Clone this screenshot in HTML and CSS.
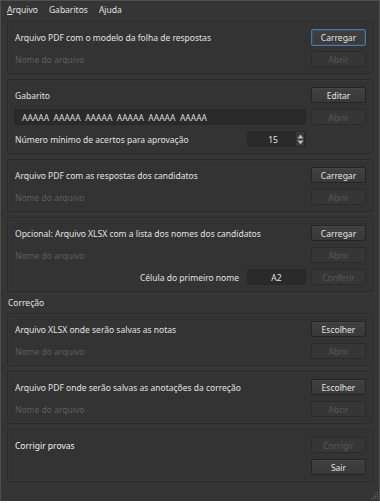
FILE: index.html
```html
<!DOCTYPE html>
<html lang="pt-BR">
<head>
    <meta charset="UTF-8">
    <meta name="viewport" content="width=device-width, initial-scale=1.0">
    <title>Correção de provas</title>
    <link rel="stylesheet" href="styles.css">
</head>
<body>
    <div class="window">

        <!-- Menu bar -->
        <nav class="menubar">
            <span class="menu"><u>A</u>rquivo</span>
            <span class="menu">Gabaritos</span>
            <span class="menu">A<u>j</u>uda</span>
        </nav>

        <main class="content">

            <!-- Modelo da folha -->
            <section class="group">
                <span class="label wide">Arquivo PDF com o modelo da folha de respostas</span>
                <button class="btn focused">Carregar</button>
                <span class="placeholder wide">Nome do arquivo</span>
                <button class="btn" disabled>Abrir</button>
            </section>

            <!-- Gabarito -->
            <section class="group">
                <span class="label wide">Gabarito</span>
                <button class="btn">Editar</button>
                <div class="field wide answers">AAAAA&nbsp;&nbsp;AAAAA&nbsp;&nbsp;AAAAA&nbsp;&nbsp;AAAAA&nbsp;&nbsp;AAAAA&nbsp;&nbsp;AAAAA</div>
                <button class="btn" disabled>Abrir</button>
                <span class="label">Número mínimo de acertos para aprovação</span>
                <div class="field spinbox">
                    <span class="spin-value">15</span>
                    <span class="spin-arrows">
                        <svg width="7" height="5" viewBox="0 0 7 5"><path d="M3.5 0.5 L6.5 4.5 L0.5 4.5 Z" fill="#b9b9b9"/></svg>
                        <svg width="7" height="5" viewBox="0 0 7 5"><path d="M0.5 0.5 L6.5 0.5 L3.5 4.5 Z" fill="#b9b9b9"/></svg>
                    </span>
                </div>
            </section>

            <!-- Respostas dos candidatos -->
            <section class="group">
                <span class="label wide">Arquivo PDF com as respostas dos candidatos</span>
                <button class="btn">Carregar</button>
                <span class="placeholder wide">Nome do arquivo</span>
                <button class="btn" disabled>Abrir</button>
            </section>

            <!-- Lista de nomes -->
            <section class="group">
                <span class="label wide">Opcional: Arquivo XLSX com a lista dos nomes dos candidatos</span>
                <button class="btn">Carregar</button>
                <span class="placeholder wide">Nome do arquivo</span>
                <button class="btn" disabled>Abrir</button>
                <span class="label right">Célula do primeiro nome</span>
                <div class="field cell">A2</div>
                <button class="btn" disabled>Conferir</button>
            </section>

            <div class="section-title">Correção</div>

            <section class="group">
                <span class="label wide">Arquivo XLSX onde serão salvas as notas</span>
                <button class="btn">Escolher</button>
                <span class="placeholder wide">Nome do arquivo</span>
                <button class="btn" disabled>Abrir</button>
            </section>

            <section class="group">
                <span class="label wide">Arquivo PDF onde serão salvas as anotações da correção</span>
                <button class="btn">Escolher</button>
                <span class="placeholder wide">Nome do arquivo</span>
                <button class="btn" disabled>Abrir</button>
            </section>

            <section class="group">
                <span class="label wide bright">Corrigir provas</span>
                <button class="btn" disabled>Corrigir</button>
                <span class="wide"></span>
                <button class="btn bright">Sair</button>
            </section>

        </main>

        <!-- size grip -->
        <svg class="grip" width="8" height="8" viewBox="0 0 8 8">
            <rect x="6" y="0" width="1" height="1" fill="#666"/>
            <rect x="4" y="2" width="1" height="1" fill="#666"/>
            <rect x="6" y="2" width="1" height="1" fill="#666"/>
            <rect x="2" y="4" width="1" height="1" fill="#666"/>
            <rect x="4" y="4" width="1" height="1" fill="#666"/>
            <rect x="6" y="4" width="1" height="1" fill="#666"/>
            <rect x="0" y="6" width="1" height="1" fill="#666"/>
            <rect x="2" y="6" width="1" height="1" fill="#666"/>
            <rect x="4" y="6" width="1" height="1" fill="#666"/>
            <rect x="6" y="6" width="1" height="1" fill="#666"/>
        </svg>
    </div>
</body>
</html>
```

FILE: styles.css
```css
body {
    margin: 0;
    padding: 0;
    background-color: #ffffff;
    font-family: "Noto Sans", "Open Sans", sans-serif;
    font-size: 8.5px;
    color: #e2e2e2;
}

.window {
    position: relative;
    box-sizing: border-box;
    width: 380px;
    height: 501px;
    background-color: #353535;
    border-top: 1px solid #4e4e4e;
    border-left: 1px solid #4e4e4e;
    border-right: 1px solid #4e4e4e;
    display: flex;
    flex-direction: column;
}

/* Menu bar */
.menubar {
    height: 16px;
    display: flex;
    align-items: center;
    padding-left: 6px;
    gap: 11px;
}

.menu u {
    text-underline-offset: 1px;
}

.content {
    display: flex;
    flex-direction: column;
    gap: 5px;
    padding: 4px 6px 0 6px;
}

/* Group boxes */
.group {
    display: grid;
    grid-template-columns: 1fr 59px 55px;
    grid-auto-rows: 16px;
    column-gap: 5px;
    row-gap: 6px;
    align-items: center;
    padding: 7px 6px 6px 6px;
    background-color: #333333;
    border: 1px solid #2a2a2a;
    border-radius: 2px;
    box-shadow: inset 0 0 0 1px rgba(255, 255, 255, 0.025);
}

.wide {
    grid-column: 1 / 3;
}

.label {
    white-space: nowrap;
    padding-left: 1px;
}

.label.right {
    text-align: right;
    padding-right: 3px;
}

.bright {
    color: #f2f2f2;
}

.placeholder {
    color: #5f5f5f;
    padding-left: 1px;
}

.section-title {
    height: 11px;
    line-height: 11px;
    padding-left: 1px;
}

/* Buttons */
.btn {
    box-sizing: border-box;
    height: 16px;
    width: 55px;
    padding: 0;
    font-family: inherit;
    font-size: 8.5px;
    color: #e4e4e4;
    background: linear-gradient(#404040, #393939);
    border: 1px solid #242424;
    border-radius: 2px;
    box-shadow: inset 0 1px 0 rgba(255, 255, 255, 0.04);
}

.btn:disabled {
    color: #595959;
    background: #363636;
    border-color: #2b2b2b;
    box-shadow: none;
}

.btn.focused {
    height: 17px;
    border-color: #4679b0;
    box-shadow: inset 0 0 0 1px rgba(70, 121, 176, 0.25);
}

/* Line edits */
.field {
    box-sizing: border-box;
    height: 16px;
    background-color: #2a2a2a;
    border: 1px solid #282828;
    border-radius: 2px;
    display: flex;
    align-items: center;
}

.answers {
    padding-left: 7px;
    color: #dedede;
    white-space: nowrap;
}

.cell {
    justify-content: center;
}

.spinbox {
    padding: 0;
}

.spin-value {
    flex: 1;
    text-align: center;
    padding-left: 2px;
}

.spin-arrows {
    width: 8px;
    height: 14px;
    margin-right: 1px;
    background-color: #3a3a3a;
    display: flex;
    flex-direction: column;
    align-items: center;
    justify-content: center;
    gap: 1px;
}

.grip {
    position: absolute;
    right: 0;
    bottom: 1px;
}
```
